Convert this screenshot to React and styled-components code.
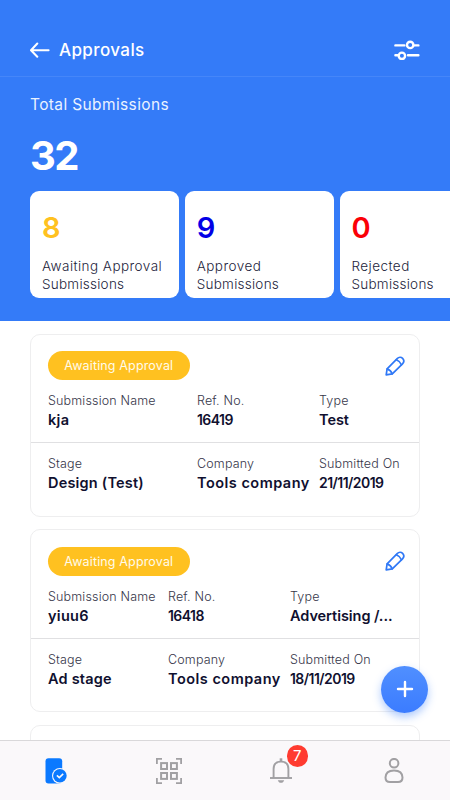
import React from "react";
import styled, { createGlobalStyle } from "styled-components";

const stats = [
  { count: 8, color: "#ffc120", label: "Awaiting Approval" },
  { count: 9, color: "#0300e6", label: "Approved" },
  { count: 0, color: "#fb0007", label: "Rejected" },
];

const submissions = [
  {
    columns: "149px 122px 1fr",
    name: "kja",
    refNo: "16419",
    type: "Test",
    stage: "Design (Test)",
    company: "Tools company",
    date: "21/11/2019",
  },
  {
    columns: "120px 122px 1fr",
    name: "yiuu6",
    refNo: "16418",
    type: "Advertising /...",
    stage: "Ad stage",
    company: "Tools company",
    date: "18/11/2019",
  },
];

const BackIcon = () => (
  <svg width="20" height="16" viewBox="0 0 20 16" fill="none" stroke="#fff" strokeWidth="2" strokeLinecap="round" strokeLinejoin="round">
    <path d="M18.6 8.3H1.2M7.3 1.5 1 8.2l6.3 6.5" />
  </svg>
);

const FilterIcon = () => (
  <svg width="26" height="20" viewBox="0 0 26 20" fill="none" stroke="#fff" strokeWidth="2.4" strokeLinecap="round">
    <path d="M1.4 5.4h9M20.8 5.4h3.6M1.4 15.2h2.4M14 15.2h10.4" />
    <circle cx="16.2" cy="4.9" r="3.2" />
    <circle cx="7.9" cy="15.8" r="3.2" />
  </svg>
);

const PencilIcon = () => (
  <svg width="20" height="20" viewBox="0 0 20 20" fill="none" stroke="#2f78f6" strokeWidth="1.7" strokeLinejoin="round" strokeLinecap="round">
    <path d="M1.2 18.8 2.1 12.8 12.2 2.6C13.9.9 16.1.8 17.6 2.4s1.6 3.7-.1 5.4L7.3 17.9Z" />
    <path d="M2.2 12.9c2.3 1 4.2 2.7 5 4.9M11.4 3.700c2.300 1 4.100 2.700 5 5" />
  </svg>
);

const PlusIcon = () => (
  <svg width="18" height="18" viewBox="0 0 18 18" fill="none" stroke="#fff" strokeWidth="2.4" strokeLinecap="round">
    <path d="M9 2v14M2 9h14" />
  </svg>
);

const ApprovalsIcon = () => (
  <svg width="24" height="28" viewBox="0 0 24 28">
    <rect x="1.500" y="1.200" width="16.700" height="25.200" rx="3" fill="#0a79ff" />
    <circle cx="15.900" cy="18.800" r="7.900" fill="#faf8fa" />
    <circle cx="15.900" cy="18.800" r="6.800" fill="#0a79ff" />
    <path d="m12.900 18.300 2.400 2.300 3.900-3.700" fill="none" stroke="#faf8fa" strokeWidth="1.600" />
  </svg>
);

const ScanIcon = () => (
  <svg width="26" height="26" viewBox="0 0 26 26" fill="none" stroke="#a1a0a3" strokeWidth="1.800">
    <path d="M.9 6V.9H6M20 .9h5.100V6M25.100 20v5.100H20M6 25.100H.9V20" />
    <g strokeWidth="2">
      <rect x="5.100" y="5.100" width="5.900" height="5.900" />
      <rect x="15" y="5.100" width="5.900" height="5.900" />
      <rect x="5.100" y="15" width="5.900" height="5.900" />
      <rect x="15" y="15" width="5.900" height="5.900" />
    </g>
  </svg>
);

const BellIcon = () => (
  <svg width="24" height="26" viewBox="0 0 24 26" fill="none" stroke="#a1a0a3" strokeWidth="1.900">
    <path d="M4.600 20V11c0-4.900 2.600-7.400 7.400-7.400s7.400 2.500 7.400 7.400v9" />
    <path d="M1 20h22" />
    <path d="M12 .3v3.400" strokeWidth="2.600" />
    <path d="M8.800 22.200h6.400c-.5 1.700-1.700 2.600-3.200 2.600s-2.700-.9-3.200-2.600Z" fill="#a1a0a3" stroke="none" />
  </svg>
);

const ProfileIcon = () => (
  <svg width="20" height="26" viewBox="0 0 20 26" fill="none" stroke="#a1a0a3" strokeWidth="2">
    <circle cx="10.100" cy="5.200" r="4.300" />
    <path d="M10 12.500c5.200 0 8.400 2.500 8.500 7.100 0 3-1.400 4.500-4.500 4.500H6c-3.100 0-4.500-1.500-4.500-4.500.1-4.600 3.300-7.100 8.500-7.100Z" />
  </svg>
);

const Field = ({ label, value, numeric, track }) => (
  <FieldHold>
    <FieldLabel>{label}</FieldLabel>
    <FieldValue $numeric={numeric} $track={track}>
      {value}
    </FieldValue>
  </FieldHold>
);

const SubmissionCard = ({ item }) => (
  <Card>
    <CardTop>
      <Badge>Awaiting Approval</Badge>
      <PencilIcon />
    </CardTop>
    <FieldRow $columns={item.columns}>
      <Field label="Submission Name" value={item.name} track={0.3} />
      <Field label="Ref. No." value={item.refNo} numeric />
      <Field label="Type" value={item.type} track={-0.05} />
    </FieldRow>
    <Divider />
    <FieldRow $columns={item.columns}>
      <Field label="Stage" value={item.stage} track={0.2} />
      <Field label="Company" value={item.company} track={0.48} />
      <Field label="Submitted On" value={item.date} numeric />
    </FieldRow>
  </Card>
);

const App = () => {
  return (
    <Screen>
      <GlobalStyle />
      <NavBar>
        <BackIcon />
        <Title>Approvals</Title>
        <FilterIcon />
      </NavBar>
      <Summary>
        <SummaryLabel>Total Submissions</SummaryLabel>
        <Total>32</Total>
        <StatRow>
          {stats.map((s) => (
            <Stat key={s.label}>
              <StatCount $color={s.color}>{s.count}</StatCount>
              <StatLabel $track={0.45}>{s.label}</StatLabel>
              <StatLabel $track={0.25}>Submissions</StatLabel>
            </Stat>
          ))}
        </StatRow>
      </Summary>
      <List>
        {submissions.map((item) => (
          <SubmissionCard key={item.refNo} item={item} />
        ))}
        <Card />
      </List>
      <AddButton aria-label="Add">
        <PlusIcon />
      </AddButton>
      <TabBar>
        <Tab>
          <ApprovalsIcon />
        </Tab>
        <Tab>
          <ScanIcon />
        </Tab>
        <Tab>
          <BellIcon />
          <Count>7</Count>
        </Tab>
        <Tab>
          <ProfileIcon />
        </Tab>
      </TabBar>
    </Screen>
  );
};

export default App;

const GlobalStyle = createGlobalStyle`
  * {
    box-sizing: border-box;
  }
  body {
    margin: 0;
    font-family: Inter, "Open Sans", sans-serif;
  }
  svg {
    display: block;
    flex-shrink: 0;
  }
`;

const Screen = styled.div`
  position: relative;
  width: 450px;
  height: 800px;
  display: flex;
  flex-direction: column;
  overflow: hidden;
  background: #fff;
`;
const NavBar = styled.div`
  height: 77px;
  flex-shrink: 0;
  display: flex;
  align-items: center;
  padding: 24px 30px 0 30px;
  background: #347bf8;
  border-bottom: 1px solid #4586f9;
`;
const Title = styled.div`
  flex: 1;
  margin-left: 9px;
  font-size: 17px;
  font-weight: 500;
  letter-spacing: 0.4px;
  color: #fff;
`;
const Summary = styled.div`
  height: 244px;
  flex-shrink: 0;
  padding: 16px 0 0 30px;
  background: #347bf8;
  overflow: hidden;
`;
const SummaryLabel = styled.div`
  font-size: 15.5px;
  line-height: 23px;
  letter-spacing: 0.37px;
  color: #eaf2ff;
`;
const Total = styled.div`
  margin-top: 15px;
  height: 60px;
  font-size: 40px;
  font-weight: 700;
  line-height: 50px;
  letter-spacing: -1.5px;
  color: #fff;
`;
const StatRow = styled.div`
  display: flex;
  gap: 5.75px;
`;
const Stat = styled.div`
  width: 149px;
  height: 107px;
  flex-shrink: 0;
  padding: 17px 12px 0;
  border-radius: 9px;
  background: #fff;
`;
const StatCount = styled.div`
  height: 49px;
  font-size: 29px;
  font-weight: 600;
  line-height: 39px;
  color: ${(props) => props.$color};
`;
const StatLabel = styled.div`
  font-size: 13.5px;
  font-weight: 300;
  line-height: 18px;
  letter-spacing: ${(props) => props.$track}px;
  white-space: nowrap;
  color: #1d1d3b;
`;
const List = styled.div`
  flex: 1;
  min-height: 0;
  display: flex;
  flex-direction: column;
  gap: 12.5px;
  padding: 12.5px 30px 0;
  overflow: hidden;
`;
const Card = styled.div`
  height: 183px;
  flex-shrink: 0;
  padding-top: 16.5px;
  border: 1px solid #eeeeef;
  border-radius: 10px;
  background: #fff;
`;
const CardTop = styled.div`
  display: flex;
  align-items: center;
  justify-content: space-between;
  padding: 0 14.5px 0 17px;
`;
const Badge = styled.div`
  width: 141.5px;
  height: 29px;
  border-radius: 15px;
  font-size: 12.5px;
  line-height: 29px;
  letter-spacing: 0.15px;
  text-align: center;
  white-space: nowrap;
  color: #fffbea;
  background: #ffc120;
`;
const FieldRow = styled.div`
  display: grid;
  grid-template-columns: ${(props) => props.$columns};
  padding: 11px 0 12px 17px;
`;
const FieldHold = styled.div`
  white-space: nowrap;
`;
const FieldLabel = styled.div`
  font-size: 12.5px;
  font-weight: 300;
  line-height: 19px;
  letter-spacing: 0.17px;
  color: #36364a;
`;
const FieldValue = styled.div`
  font-size: ${(props) => (props.$numeric ? "14px" : "14.5px")};
  font-weight: 600;
  line-height: 20px;
  letter-spacing: ${(props) => (props.$numeric ? -0.55 : props.$track)}px;
  color: #10102f;
`;
const Divider = styled.div`
  height: 1px;
  background: #e0e0e2;
`;
const AddButton = styled.button`
  position: absolute;
  left: 381px;
  top: 665.5px;
  width: 47px;
  height: 47px;
  display: flex;
  align-items: center;
  justify-content: center;
  padding: 0;
  border: none;
  border-radius: 50%;
  background: linear-gradient(#508fff, #3b7cff);
  box-shadow: 0 4px 9px rgba(52, 123, 248, 0.4);
`;
const TabBar = styled.div`
  height: 60px;
  flex-shrink: 0;
  display: flex;
  border-top: 1px solid #d9d8da;
  background: #faf8fa;
`;
const Tab = styled.div`
  position: relative;
  flex: 1;
  display: flex;
  align-items: center;
  justify-content: center;
`;
const Count = styled.div`
  position: absolute;
  left: 61.5px;
  top: 4px;
  width: 21.5px;
  height: 21.5px;
  border-radius: 50%;
  font-size: 15px;
  line-height: 21.5px;
  text-align: center;
  color: #fff;
  background: #ff3b30;
`;
